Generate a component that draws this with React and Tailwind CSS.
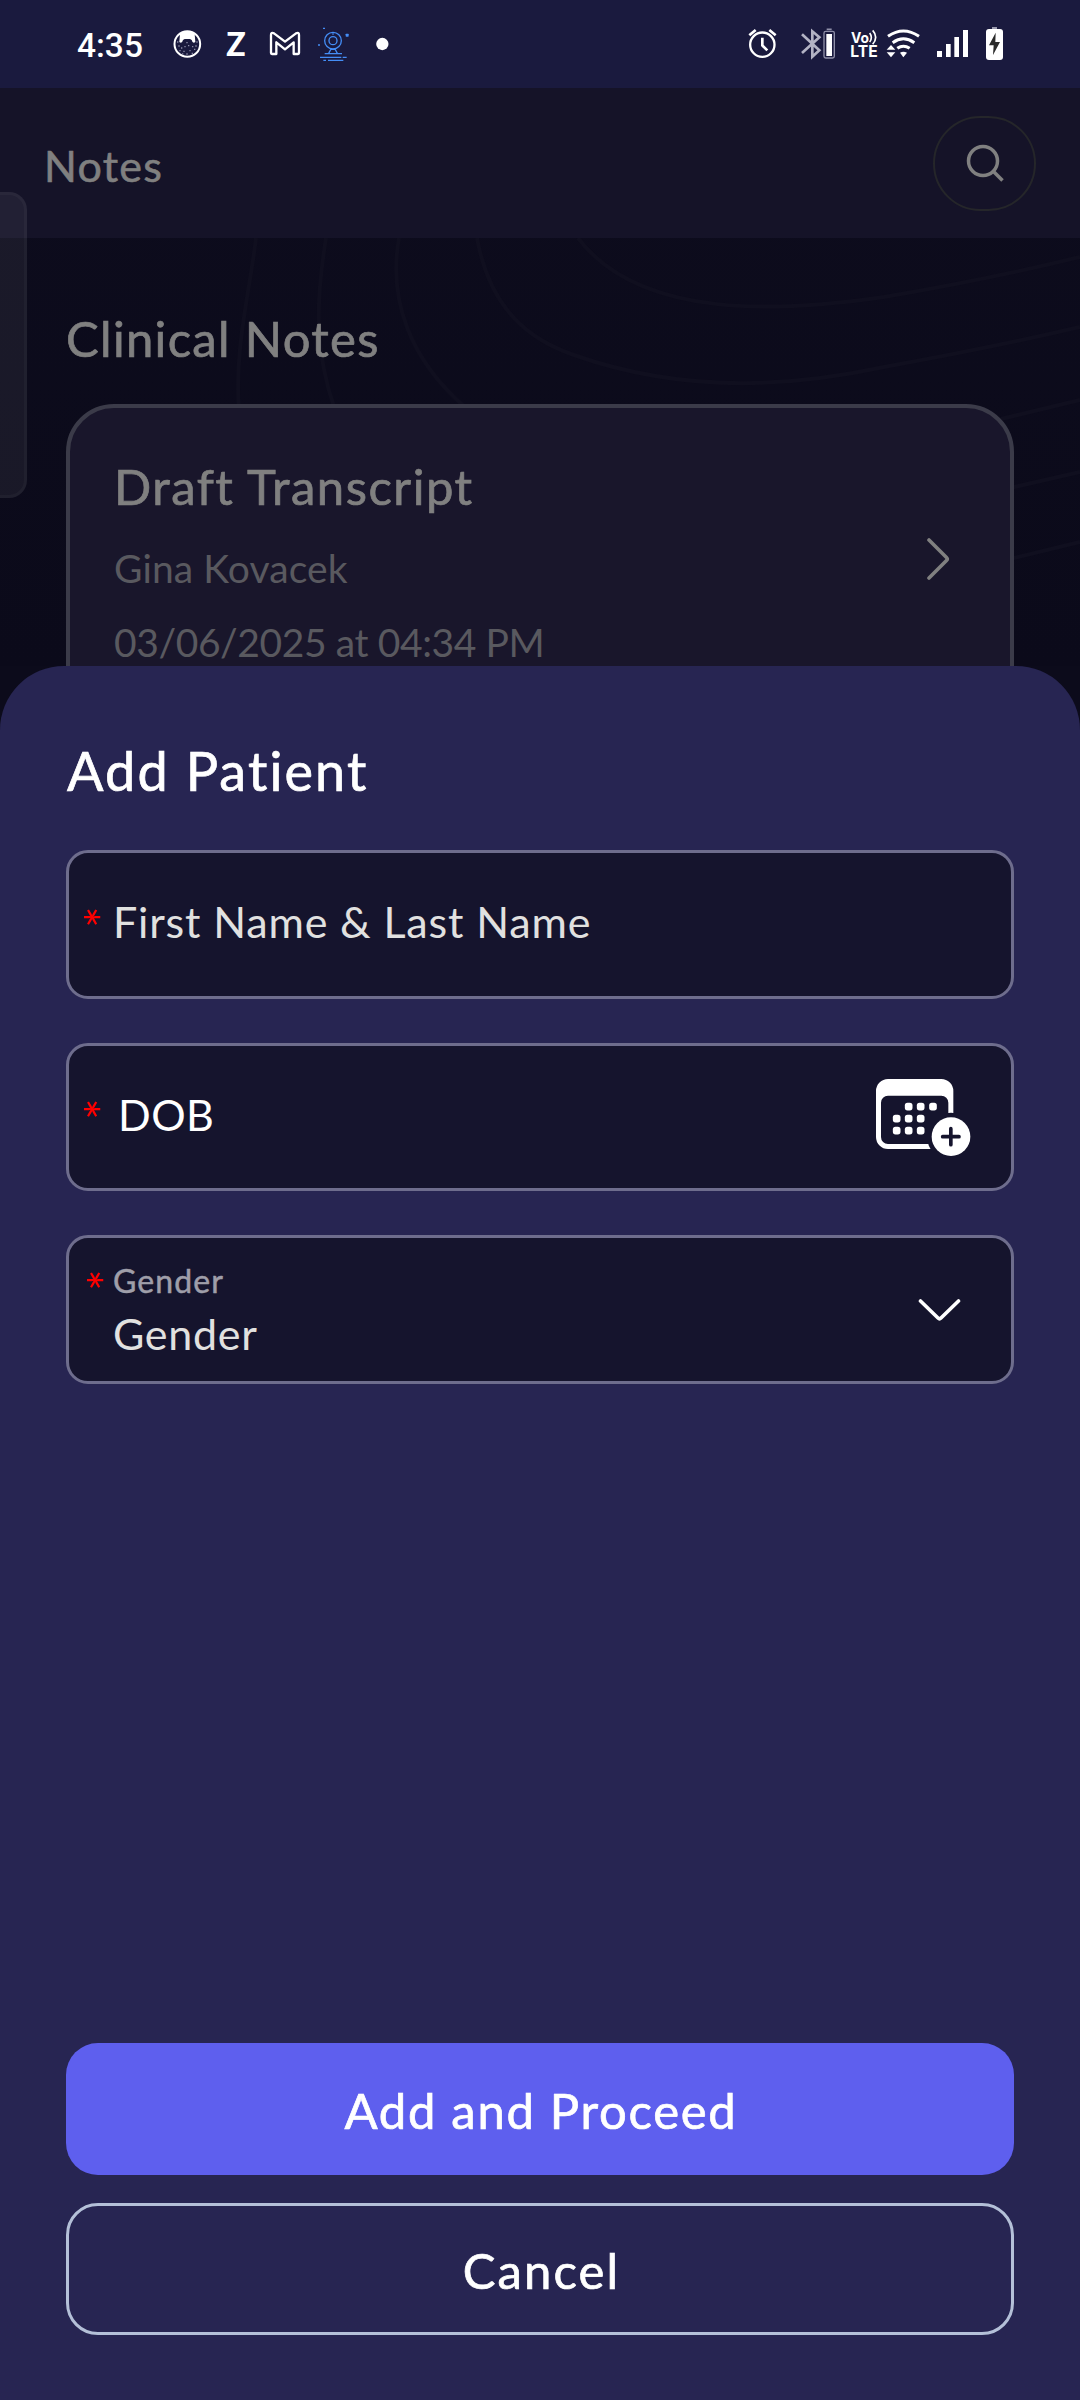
import React from 'react';

const StatusIcon = ({ x, w, className = '', children }) => (
  <svg className={`h-12 shrink-0 ${className}`} viewBox={`${x} 0 ${w} 144`} fill="none" aria-hidden="true">
    {children}
  </svg>
);

function StatusBar() {
  return (
    <div className="flex h-[88px] shrink-0 items-center justify-between bg-[#1a1a3e] pr-[75px] pl-[77px] text-white">
      <div className="flex items-center">
        <span className="w-[93px] pt-[3px] font-['Roboto',sans-serif] text-[33.5px] leading-10 font-medium">4:35</span>
        <StatusIcon x={30} w={108} className="w-9">
          <circle cx="82" cy="72" r="38.5" stroke="#fff" strokeWidth="6" />
          <path d="M60 42C70 30 94 30 104 42L106 66Q98 72 95 60L90 57H74L69 60Q66 72 58 66Z" fill="#fff" />
          <path d="M51 66h4M109 66h4M55 78h4M63 84h4M73 80h4M84 77h4M96 80h4M106 78h4M102 88h4M58 92h4M70 94h4M88 92h4M79 102h4M95 100h4M79 68h4M66 102h4" stroke="#8c8ca6" strokeWidth="4" />
        </StatusIcon>
        <span className="ml-4 w-7 text-center font-['Lato',sans-serif] text-[32px] leading-10 font-black">Z</span>
        <StatusIcon x={318} w={114} className="ml-4 w-[38px]">
          <path
            d="M333 99V45Q333 36 342 40L375 65L408 40Q417 36 417 45V99Q417 102 414 102H401V67L375 88L349 67V102H336Q333 102 333 99Z"
            stroke="#fff" strokeWidth="7" strokeLinejoin="round"
          />
        </StatusIcon>
        <StatusIcon x={462} w={114} className="ml-2.5 w-[38px]">
          <g stroke="#448df5" strokeWidth="4">
            <circle cx="519" cy="62" r="25" />
            <circle cx="519" cy="62" r="12" />
            <path d="M513 87L506 100M525 87L532 100M512 88h14M494 101h52M480 112h64M548 112h12M490 121h8M504 121h46M489 25h6M519 40v4M474 75h6" />
          </g>
          <rect x="557" y="41" width="9" height="9" rx="2" fill="#448df5" />
        </StatusIcon>
        <StatusIcon x={642} w={48} className="ml-[22px] w-4">
          <circle cx="667" cy="72" r="18.5" fill="#fff" />
        </StatusIcon>
      </div>
      <div className="flex items-center">
        <StatusIcon x={18} w={102} className="w-[34px]">
          <circle cx="67" cy="74" r="36.5" stroke="#fff" strokeWidth="7" />
          <path d="M67 53V76L82 91" stroke="#fff" strokeWidth="8" />
          <path d="M28 46L47 30M107 46L88 30" stroke="#fff" strokeWidth="8" />
        </StatusIcon>
        <StatusIcon x={180} w={111} className="ml-5 w-[37px]">
          <path d="M186 43L238 91L217 110V34L238 52L186 99" stroke="#b3b3c4" strokeWidth="8" />
          <rect x="252" y="34" width="31" height="80" rx="5" stroke="#8f8fa8" strokeWidth="4" />
          <path d="M260 28h15" stroke="#8f8fa8" strokeWidth="5" />
          <rect x="259" y="42" width="17" height="66" fill="#fff" />
        </StatusIcon>
        <StatusIcon x={324} w={93} className="ml-[11px] w-[31px]">
          <text x="333" y="68" fill="#fff" className="font-['Inter',sans-serif] text-[43px] font-bold" textLength="54" lengthAdjust="spacingAndGlyphs">Vo</text>
          <path d="M389 39Q399 52 389 66M398 31Q416 51 398 73" stroke="#fff" strokeWidth="5" />
          <text x="331" y="112" fill="#fff" className="font-['Inter',sans-serif] text-[46px] font-bold" textLength="82" lengthAdjust="spacingAndGlyphs">LTE</text>
        </StatusIcon>
        <StatusIcon x={438} w={108} className="ml-[7px] w-9">
          <path d="M444 49Q490 17 537 49M458 68Q490 45 523 68M472 85Q490 72 509 85" stroke="#fff" strokeWidth="9" />
          <path d="M480 98Q490 92 501 98L490 112Z" fill="#fff" />
          <path d="M453 75L466 89H440ZM453 112L466 97H440Z" fill="#fff" />
        </StatusIcon>
        <StatusIcon x={585} w={105} className="ml-[13px] w-[35px]">
          <path d="M591 93h15v18h-15zM618 72h14v39h-14zM643 51h14v60h-14zM669 30h15v81h-15z" fill="#fff" />
        </StatusIcon>
        <StatusIcon x={732} w={63} className="ml-3.5 w-[21px]">
          <path d="M756 24h15" stroke="#9a9aae" strokeWidth="6" />
          <rect x="738" y="27" width="51" height="93" rx="9" fill="#fff" />
          <path d="M767 38L747 76H761L759 105L780 66H766Z" fill="#2a2a2a" />
        </StatusIcon>
      </div>
    </div>
  );
}

function Contours() {
  return (
    <svg className="absolute inset-0 h-[578px] w-[1080px]" viewBox="0 88 1080 578" fill="none" stroke="#100f1f" strokeWidth="4" aria-hidden="true">
      <path d="M256 238C250 290 234 350 239 410" />
      <path d="M326 238C316 300 314 350 335 410" />
      <path d="M399 238C388 300 410 360 466 408" />
      <path d="M477 238C490 310 530 340 574 355C690 396 800 385 884 367Q990 348 1080 327" />
      <path d="M578 238C640 320 780 312 884 297Q990 279 1080 257" />
      <path d="M1001 419L1080 400M1010 488L1080 472M1010 559L1080 542" />
    </svg>
  );
}

const Star = ({ className = '' }) => (
  <span className={`flex size-4 shrink-0 items-center justify-center text-[#ff0000] ${className}`}>
    <span className="-translate-x-[12px] rotate-90 text-[51px] leading-4">*</span>
  </span>
);

function CalendarPlus() {
  return (
    <svg className="mt-px mr-10 h-[77px] w-[95px]" viewBox="109 147 285 231" fill="none" aria-hidden="true">
      <mask id="badge-gap">
        <rect x="100" y="140" width="300" height="250" fill="#fff" />
        <circle cx="334" cy="320" r="72" fill="#000" />
      </mask>
      <path
        mask="url(#badge-gap)" fill="#fff" fillRule="evenodd"
        d="M145 147H305A36 36 0 0 1 341 183V321A36 36 0 0 1 305 357H145A36 36 0 0 1 109 321V183A36 36 0 0 1 145 147ZM145 197A21 21 0 0 0 124 218V321A21 21 0 0 0 145 342H305A21 21 0 0 0 326 321V218A21 21 0 0 0 305 197Z"
      />
      {[[207, 230], [243, 230], [280, 230], [171, 266], [207, 266], [243, 266], [171, 302], [207, 302], [243, 302]].map(([x, y]) => (
        <rect key={`${x}-${y}`} x={x - 11.5} y={y - 11.5} width="23" height="23" rx="8" fill="#fff" />
      ))}
      <circle cx="334" cy="320" r="58" fill="#fff" />
      <path d="M309 320H358M333.500 296V344" stroke="#15142d" strokeWidth="11" strokeLinecap="round" />
    </svg>
  );
}

const Field = ({ className, children }) => (
  <div className={`flex shrink-0 rounded-[22px] border-[3px] border-[#6e6d8d] bg-[#15142d] ${className}`}>{children}</div>
);

export default function App() {
  return (
    <div className="flex h-[2400px] w-[1080px] flex-col overflow-hidden bg-[#0c0b1b] font-['Lato',sans-serif]">
      <StatusBar />

      <div className="relative flex h-[578px] shrink-0 flex-col overflow-hidden bg-linear-to-b from-[#0d0c1d] to-[#0b0a1a]">
        <Contours />
        <header className="relative flex h-[150px] shrink-0 items-center justify-between bg-[#151328] pr-11 pl-11">
          <h1 className="pt-1.5 text-[43px] leading-[54px] tracking-[1.3px] text-[#808080] [-webkit-text-stroke:0.6px_#808080]">Notes</h1>
          <button className="flex h-[95px] w-[103px] items-center justify-center rounded-[48px] border-2 border-[#25262a]" aria-label="Search">
            <svg className="size-10" viewBox="0 0 40 40" fill="none" stroke="#808080" strokeWidth="3.500" aria-hidden="true">
              <circle cx="18" cy="18" r="14.500" />
              <path d="M28 28L37.500 37.500" />
            </svg>
          </button>
        </header>

        <main className="relative px-[66px] pt-[70px]">
          <h2 className="text-[49px] leading-[60px] tracking-[1.3px] text-[#808080] [-webkit-text-stroke:0.7px_#808080]">Clinical Notes</h2>
          <article className="mt-9 flex h-[310px] items-center justify-between rounded-[48px] border-4 border-[#3b3b49] bg-[#19162b] pr-[60px] pl-11">
            <div className="self-start pt-12">
              <h3 className="text-[49px] leading-[60px] tracking-[1.5px] text-[#808080] [-webkit-text-stroke:0.7px_#808080]">Draft Transcript</h3>
              <p className="mt-[27px] text-[39px] leading-[50px] tracking-[0.1px] text-[#59595f]">Gina Kovacek</p>
              <p className="mt-6 text-[39px] leading-[50px] tracking-[-0.4px] text-[#59595f]">03/06/2025 at 04:34 PM</p>
            </div>
            <svg className="h-[44px] w-6 shrink-0" viewBox="0 0 24 44" fill="none" stroke="#808080" strokeWidth="3.600" strokeLinecap="round" strokeLinejoin="round" aria-hidden="true">
              <path d="M3 3L20.500 20.500Q22 22 20.500 23.500L3 41" />
            </svg>
          </article>
        </main>
        <div className="absolute top-[104px] left-0 h-[306px] w-[27px] rounded-r-[18px] border-[3px] border-l-0 border-white/[0.03] bg-white/[0.06]" />
      </div>

      <section className="flex flex-1 flex-col rounded-t-[64px] bg-[#272552] px-[66px] pt-[73px] pb-[65px]">
        <h2 className="pl-px text-[54px] leading-[64px] tracking-[2.1px] text-white [-webkit-text-stroke:0.7px_#fff]">Add Patient</h2>

        <Field className="mt-[47px] h-[149px] items-center pl-4">
          <Star className="-mt-4" />
          <span className="mb-[5px] ml-3 text-[43px] leading-[54px] tracking-[0.85px] text-[#e1e1e0]">First Name &amp; Last Name</span>
        </Field>

        <Field className="mt-11 h-[148px] items-center justify-between pl-4">
          <div className="flex items-center">
            <Star className="-mt-4" />
            <span className="mb-1 ml-[17px] text-[43px] leading-[54px] tracking-[0.5px] text-white">DOB</span>
          </div>
          <CalendarPlus />
        </Field>

        <Field className="mt-11 h-[149px] items-center justify-between pl-[19px]">
          <div className="flex self-start pt-[23px]">
            <Star className="mt-[11px]" />
            <div className="ml-[9px] flex flex-col">
              <span className="text-[32px] leading-10 tracking-[1.1px] text-[#9f9ea9] [-webkit-text-stroke:0.5px_#9f9ea9]">Gender</span>
              <span className="mt-1.5 text-[43px] leading-[54px] tracking-[0.7px] text-[#e1e1e0]">Gender</span>
            </div>
          </div>
          <svg className="mr-[49px] h-6 w-11" viewBox="0 0 44 24" fill="none" stroke="#fff" strokeWidth="3.600" strokeLinecap="round" strokeLinejoin="round" aria-hidden="true">
            <path d="M2.500 3L20 20Q21.500 21.500 23 20L40.500 3" />
          </svg>
        </Field>

        <button className="mt-auto h-[132px] shrink-0 rounded-[32px] bg-[#5e5fee] pt-0.5 pl-0.5 text-[49px] leading-[60px] tracking-[1.7px] text-white [-webkit-text-stroke:0.7px_#fff]">Add and Proceed</button>
        <button className="mt-7 h-[132px] shrink-0 rounded-[32px] border-[3px] border-[#b4c0d8] pt-0.5 pl-[3px] text-[49px] leading-[60px] tracking-[2.1px] text-white [-webkit-text-stroke:0.7px_#fff]">Cancel</button>
      </section>
    </div>
  );
}
